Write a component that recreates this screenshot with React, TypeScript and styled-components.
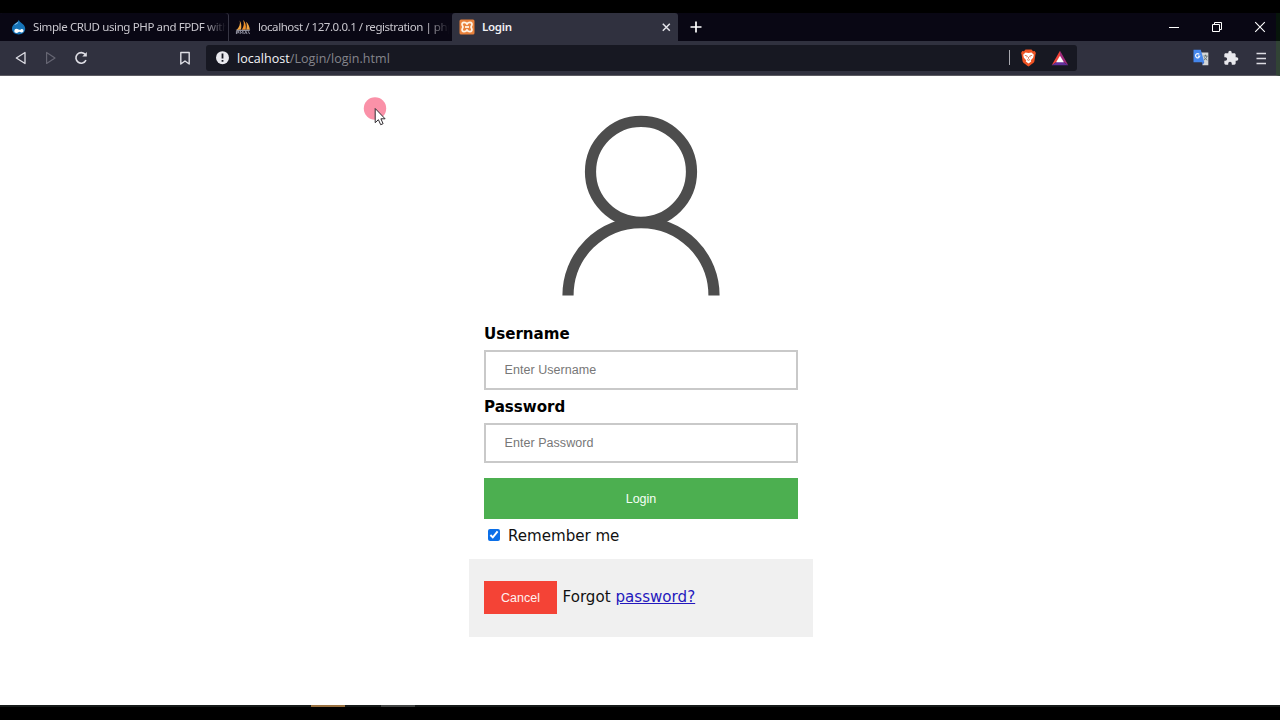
import React from 'react';
import styled, { createGlobalStyle } from 'styled-components';

const Global = createGlobalStyle`
  * { box-sizing: border-box; }
  html, body { margin: 0; background: #000; }
  body { width: 1280px; height: 720px; overflow: hidden; }
  svg { display: block; flex: none; }
`;

const Screen = styled.div`
  position: relative;
  width: 1280px;
  height: 720px;
  padding-top: 13px;
  display: flex;
  flex-direction: column;
  background: #000;
  font-family: 'Open Sans', 'Noto Sans', sans-serif;
`;

const TabStrip = styled.div`
  height: 28px;
  display: flex;
  background: #090714;
  border-right: 4px solid #07150b;
`;

const Tab = styled.div<{ $width: number; $active?: boolean; $divider?: boolean; $inset: number }>`
  width: ${p => p.$width}px;
  height: 28px;
  padding: 0 ${p => (p.$active ? 6 : 3)}px 0 ${p => p.$inset}px;
  display: flex;
  align-items: center;
  gap: 7px;
  flex: none;
  border-radius: 3px 3px 0 0;
  background: ${p => (p.$active ? '#30313f' : 'transparent')};
  box-shadow: ${p => (p.$divider ? 'inset -1px 0 #363543' : 'none')};
`;

const TabTitle = styled.span<{ $active?: boolean; $spacing: number }>`
  flex: 1;
  overflow: hidden;
  white-space: nowrap;
  font-family: 'Noto Sans', 'Open Sans', sans-serif;
  font-size: 11.5px;
  line-height: 28px;
  letter-spacing: ${p => p.$spacing}px;
  font-weight: ${p => (p.$active ? 600 : 400)};
  color: ${p => (p.$active ? '#f0f0f4' : '#c9c7ce')};
  mask-image: ${p => (p.$active ? 'none' : 'linear-gradient(to right, #000 calc(100% - 22px), transparent)')};
`;

const NewTab = styled.div`
  width: 36px;
  display: flex;
  align-items: center;
  justify-content: center;
`;

const WindowControls = styled.div`
  margin-left: auto;
  padding: 0 10px 1px 0;
  display: flex;
  align-items: center;
  gap: 31px;
`;

const Toolbar = styled.div`
  height: 35px;
  padding: 0 7px 1px 14px;
  display: flex;
  align-items: center;
  background: #30313f;
  border-bottom: 1px solid #5c5b62;
  border-right: 4px solid #314335;
`;

const NavButtons = styled.div`
  width: 192px;
  display: flex;
  align-items: center;
  gap: 16px;
`;

const BookmarkSlot = styled.div`
  margin-left: auto;
  margin-right: 14px;
`;

const AddressBar = styled.div`
  width: 871px;
  height: 26px;
  padding: 0 8px 0 9px;
  display: flex;
  align-items: center;
  border-radius: 3px;
  background: #171822;
`;

const Url = styled.div`
  margin-left: 7px;
  padding-top: 1px;
  font-size: 12.5px;
  letter-spacing: 0.05px;
  line-height: 25px;
  color: #85858c;
`;

const Host = styled.span`
  color: #f4f4f7;
`;

const Shields = styled.div`
  margin-left: auto;
  display: flex;
  align-items: center;
  gap: 14px;
`;

const ShieldDivider = styled.div`
  width: 1px;
  height: 15px;
  margin-right: -4px;
  background: #a9a9b0;
`;

const Extensions = styled.div`
  margin-left: auto;
  display: flex;
  align-items: center;
  gap: 14px;
`;

const Page = styled.main`
  height: 629px;
  padding-top: 39px;
  display: flex;
  flex-direction: column;
  align-items: center;
  background: #fff;
  color: #111;
  font-family: 'DejaVu Sans', sans-serif;
  font-size: 15.1px;
`;

const Form = styled.form`
  width: 344px;
  margin-left: 1px;
  display: flex;
  flex-direction: column;
`;

const Avatar = styled.div`
  display: flex;
  justify-content: center;
`;

const Fields = styled.div`
  padding: 29px 15px 0;
  display: flex;
  flex-direction: column;
`;

const FieldLabel = styled.label`
  height: 18px;
  padding-left: 0.5px;
  line-height: 18px;
  font-weight: 700;
  letter-spacing: -0.02px;
  color: #000;
`;

const TextField = styled.input`
  width: 314px;
  height: 40px;
  margin: 7px 0 8px;
  padding: 0 19px;
  border: 2px solid #c9c9c9;
  border-radius: 0;
  outline: none;
  background: #fff;
  font-family: 'Liberation Sans', Arial, sans-serif;
  font-size: 12.5px;
  letter-spacing: 0.05px;
  &::placeholder { color: #777; opacity: 1; }
`;

const Button = styled.button`
  padding: 0 0 0 1px;
  border: none;
  font-family: 'Liberation Sans', Arial, sans-serif;
  font-size: 12.5px;
`;

const LoginButton = styled(Button)`
  height: 41px;
  margin-top: 7px;
  background: #4caf50;
  color: #f5fff5;
`;

const Remember = styled.label`
  height: 40px;
  padding: 0 0 7px 4px;
  display: flex;
  align-items: center;
  gap: 8px;
`;

const CheckBox = styled.input`
  width: 12px;
  height: 12px;
  margin: 0 0 1px;
  accent-color: #0b6fe8;
`;

const RememberText = styled.span`
  padding-left: 0.6px;
  letter-spacing: -0.04px;
`;

const Footer = styled.div`
  height: 78px;
  padding: 0 15px 1px;
  display: flex;
  align-items: center;
  gap: 6px;
  background: #f0f0f0;
`;

const CancelButton = styled(Button)`
  width: 73px;
  height: 33px;
  background: #f44336;
  color: #fff1ef;
`;

const Forgot = styled.span`
  line-height: 20px;
  margin-top: -1px;
  letter-spacing: 0.01px;
`;

const Link = styled.a`
  color: #2418bd;
  text-decoration: underline;
`;

const Taskbar = styled.div`
  height: 2px;
  padding-left: 311px;
  display: flex;
  gap: 36px;
  background: #161a19;
`;

const TaskMark = styled.div<{ $color: string }>`
  width: 34px;
  height: 2px;
  background: ${p => p.$color};
`;

const Pointer = styled.div`
  position: absolute;
  left: 360px;
  top: 93px;
`;

const DropIcon = () => (
  <svg width="15" height="16" viewBox="0 0 15 16">
    <path d="M7.8.8C8.4 3 10.500 3.800 12 5.200c1.500 1.400 2.200 2.800 2.200 4.600 0 3.400-3 5.700-6.600 5.700S1 13.200 1 9.800c0-2.300 1.200-3.900 3-5.200C5.500 3.600 7 3 7.800.8Z" fill="#1674b9" />
    <path d="M7.300 2.500C6.500 4 4.500 4.500 3.200 6c2-.6 4-1.300 4.100-3.500Z" fill="#b3daf3" />
    <path d="M3.300 12.200c0-1.700 1-2.500 2.200-2.500 1.400 0 2.300 1.100 3.200 1.100s1.300-.8 2.300-.8 1.500.8 1.500 1.800-.8 1.700-1.700 1.700c-.8 0-1.400-.8-2.200-.8-.9 0-1.600 1.200-3 1.200-1.300 0-2.300-.6-2.300-1.700Z" fill="#fff" />
  </svg>
);

const SailIcon = () => (
  <svg width="16" height="16" viewBox="0 0 17 16">
    <path d="M5 1.200C5.900 4.500 4.700 8.500 1.300 11.500l5-.8c.9-3.200.4-6.700-1.300-9.500Z" fill="#f3a541" />
    <path d="M8.500.3c1.600 3.500 1.100 7.200-1.300 10.700l4.200-.2C12.100 6.500 11.200 2.800 8.500.3Z" fill="#f39127" />
    <path d="M11.700 2.500c1.100 3 .9 5.700.2 8.300l3.900.2C15.400 7.500 14.200 4.500 11.700 2.500Z" fill="#f3a541" />
    <path d="M.7 11h15.600l-1 1.200H2Z" fill="#8d8e9c" />
    <path d="M1.500 15.500v-3h2.200v1.700H1.500M5.500 15.500v-3L7 14l1.500-1.500v3M10.200 15.500l1.300-3 1.300 3M14 12.500l1.500 3" fill="none" stroke="#9c9cab" strokeWidth="1" />
  </svg>
);

const XamppIcon = () => (
  <svg width="16" height="16" viewBox="0 0 16 16">
    <rect x=".5" y=".5" width="15" height="15" rx="1.500" fill="#e9813b" />
    <path d="M8 5.200C7.300 3.700 6.300 3.400 5 3.400 3.300 3.400 2.800 4.800 3.200 6L4 8l-.8 2c-.4 1.200.1 2.600 1.800 2.600 1.300 0 2.300-.3 3-1.800.7 1.500 1.700 1.800 3 1.800 1.700 0 2.200-1.400 1.800-2.600L12 8l.8-2c.4-1.200-.1-2.600-1.800-2.600-1.300 0-2.300.3-3 1.800Z" fill="none" stroke="#fff3e4" strokeWidth="1.800" strokeLinejoin="round" />
    <path d="M6 8h4" stroke="#fff3e4" strokeWidth="1.800" />
  </svg>
);

const NavIcons = () => (
  <>
    <svg width="14" height="16" viewBox="0 0 14 16">
      <path d="M11 2.500v11L2.300 8Z" fill="none" stroke="#dedee5" strokeWidth="1.300" strokeLinejoin="round" />
    </svg>
    <svg width="14" height="16" viewBox="0 0 14 16">
      <path d="M2.600 2.500v11L11 8Z" fill="none" stroke="#666673" strokeWidth="1.200" strokeLinejoin="round" />
    </svg>
    <svg width="15" height="16" viewBox="0 0 15 16">
      <path d="M11.400 4.600A5.300 5.300 0 1 0 12 10.200" fill="none" stroke="#dedee5" strokeWidth="1.600" />
      <path d="M12.800 2v4.600H8.300Z" fill="#dedee5" />
    </svg>
  </>
);

const BraveIcon = () => (
  <svg width="17" height="18" viewBox="0 0 17 18">
    <path d="M5.500.6h6l1.500 1.600 1.700-.2 1.200 2.100-.5 1.600-1 6.500c-.3 1.300-1.600 2.300-5.900 5.200-4.300-2.900-5.600-3.900-5.900-5.200l-1-6.500-.5-1.600L2.300 2l1.700.2Z" fill="#ee5324" />
    <path d="M5.500 3.500l3 .5 3-.5 2.300 2.300-.7 3-2.300 2.400.4 1.300-2.700 2.100-2.700-2.100.4-1.300-2.300-2.400-.7-3Z" fill="#fff" />
    <path d="M4.800 6.300l2.500.8-.4 1.200M12.200 6.300l-2.500.8.4 1.200M8.500 8v1.800M7 10.500l1.500.8 1.500-.8" fill="none" stroke="#d95a32" strokeWidth=".8" />
  </svg>
);

const BatIcon = () => (
  <svg width="18" height="16" viewBox="0 0 18 16">
    <path d="M9 .8.700 15.200 9 9.800Z" fill="#f0433a" />
    <path d="M9 .8 17.300 15.200 9 9.800Z" fill="#a02a7c" />
    <path d="M.7 15.200h16.600L9 9.800Z" fill="#62309c" />
    <path d="M9 5.700 12.900 12.300H5.100Z" fill="#fff" />
  </svg>
);

const TranslateIcon = () => (
  <svg width="16" height="17" viewBox="0 0 16 17">
    <path d="M7 3.500h8.300v12.700H9.500Z" fill="#d4d6d6" />
    <path d="M.5.700h7.300l3.500 12.500H.5Z" fill="#4587ed" />
    <path d="M8.800 13.200h2.500l-1.700 2.900Z" fill="#2458be" />
    <path d="M6.300 5.400A2.100 2.100 0 1 0 6.700 7.200H4.900" fill="none" stroke="#edf4ff" strokeWidth="1.200" />
    <path d="M10.500 7h4M12.500 5.700V7M14 7c-.4 2-1.600 3.200-3 4M11.300 8.300c.6 1.300 1.600 2.200 3 2.900" fill="none" stroke="#607070" strokeWidth=".9" />
  </svg>
);

const PuzzleIcon = () => (
  <svg width="16" height="16" viewBox="0 0 24 24">
    <path d="M20.500 11H19V7c0-1.100-.9-2-2-2h-4V3.500a2.500 2.500 0 0 0-5 0V5H4c-1.100 0-2 .9-2 2v3.800h1.500a2.700 2.700 0 0 1 0 5.400H2V20c0 1.100.9 2 2 2h3.800v-1.500a2.700 2.700 0 0 1 5.400 0V22H17c1.100 0 2-.9 2-2v-4h1.500a2.500 2.500 0 0 0 0-5Z" fill="#e8e8ed" />
  </svg>
);

export default function App() {
  return (
    <Screen>
      <Global />
      <TabStrip>
        <Tab $width={229} $inset={11} $divider>
          <DropIcon />
          <TabTitle $spacing={-0.38}>Simple CRUD using PHP and FPDF with</TabTitle>
        </Tab>
        <Tab $width={223} $inset={6}>
          <SailIcon />
          <TabTitle $spacing={-0.44}>localhost / 127.0.0.1 / registration | php</TabTitle>
        </Tab>
        <Tab $width={226} $inset={7} $active>
          <XamppIcon />
          <TabTitle $active $spacing={-0.25}>Login</TabTitle>
          <svg width="11" height="11" viewBox="0 0 11 11">
            <path d="m1.800 1.800 7 7M8.800 1.800l-7 7" stroke="#e5e5eb" strokeWidth="1.500" />
          </svg>
        </Tab>
        <NewTab>
          <svg width="12" height="12" viewBox="0 0 12 12">
            <path d="M6 .5v11M.5 6h11" stroke="#fff" strokeWidth="1.700" />
          </svg>
        </NewTab>
        <WindowControls>
          <svg width="12" height="12" viewBox="0 0 12 12">
            <path d="M1 6.500h10" stroke="#fff" strokeWidth="1" />
          </svg>
          <svg width="12" height="12" viewBox="0 0 12 12">
            <path d="M1.500 3.500h7v7h-7ZM3.500 3.500v-2h7v7h-2" fill="none" stroke="#fff" strokeWidth="1" />
          </svg>
          <svg width="12" height="12" viewBox="0 0 12 12">
            <path d="m1.200 1.200 9.600 9.600M10.800 1.200l-9.600 9.600" stroke="#fff" strokeWidth="1.100" />
          </svg>
        </WindowControls>
      </TabStrip>
      <Toolbar>
        <NavButtons>
          <NavIcons />
          <BookmarkSlot>
            <svg width="14" height="16" viewBox="0 0 14 16">
              <path d="M2.800 2.500h8.400v11.500L7 11l-4.200 3Z" fill="none" stroke="#dedee5" strokeWidth="1.400" strokeLinejoin="round" />
            </svg>
          </BookmarkSlot>
        </NavButtons>
        <AddressBar>
          <svg width="15" height="15" viewBox="0 0 15 15">
            <circle cx="7.500" cy="7.700" r="6.500" fill="#e9e9ee" />
            <path d="M7.500 3.500v5M7.500 9.900v1.800" stroke="#171822" strokeWidth="1.800" />
          </svg>
          <Url><Host>localhost</Host>/Login/login.html</Url>
          <Shields>
            <ShieldDivider />
            <BraveIcon />
            <BatIcon />
          </Shields>
        </AddressBar>
        <Extensions>
          <TranslateIcon />
          <PuzzleIcon />
          <svg width="16" height="16" viewBox="0 0 16 16">
            <path d="M3.500 3.500h9.500M3.500 8.500h9.500M3.500 13.500h9.500" stroke="#dcdce2" strokeWidth="1.600" />
          </svg>
        </Extensions>
      </Toolbar>
      <Page>
        <Form onSubmit={e => e.preventDefault()}>
          <Avatar>
            <svg width="160" height="181" viewBox="0 0 160 181">
              <g fill="none" stroke="#4d4d4d" strokeWidth="11.200">
                <circle cx="80" cy="56.800" r="50.500" />
                <path d="M7 180.500a73 73 0 0 1 146 0" />
              </g>
            </svg>
          </Avatar>
          <Fields>
            <FieldLabel htmlFor="user">Username</FieldLabel>
            <TextField id="user" placeholder="Enter Username" />
            <FieldLabel htmlFor="pass">Password</FieldLabel>
            <TextField id="pass" type="password" placeholder="Enter Password" />
            <LoginButton type="submit">Login</LoginButton>
            <Remember>
              <CheckBox type="checkbox" defaultChecked />
              <RememberText>Remember me</RememberText>
            </Remember>
          </Fields>
          <Footer>
            <CancelButton type="button">Cancel</CancelButton>
            <Forgot>Forgot <Link href="#">password?</Link></Forgot>
          </Footer>
        </Form>
      </Page>
      <Taskbar>
        <TaskMark $color="#98703f" />
        <TaskMark $color="#414443" />
      </Taskbar>
      <Pointer>
        <svg width="32" height="36" viewBox="0 0 32 36">
          <circle cx="15" cy="15.500" r="11.200" fill="#fa91a8" />
          <path d="M15.200 15.500v14.200l3.200-3 2.300 5 2.400-1-2.200-4.900h4.200Z" fill="#fff" stroke="#302b30" strokeWidth="1" />
        </svg>
      </Pointer>
    </Screen>
  );
}
